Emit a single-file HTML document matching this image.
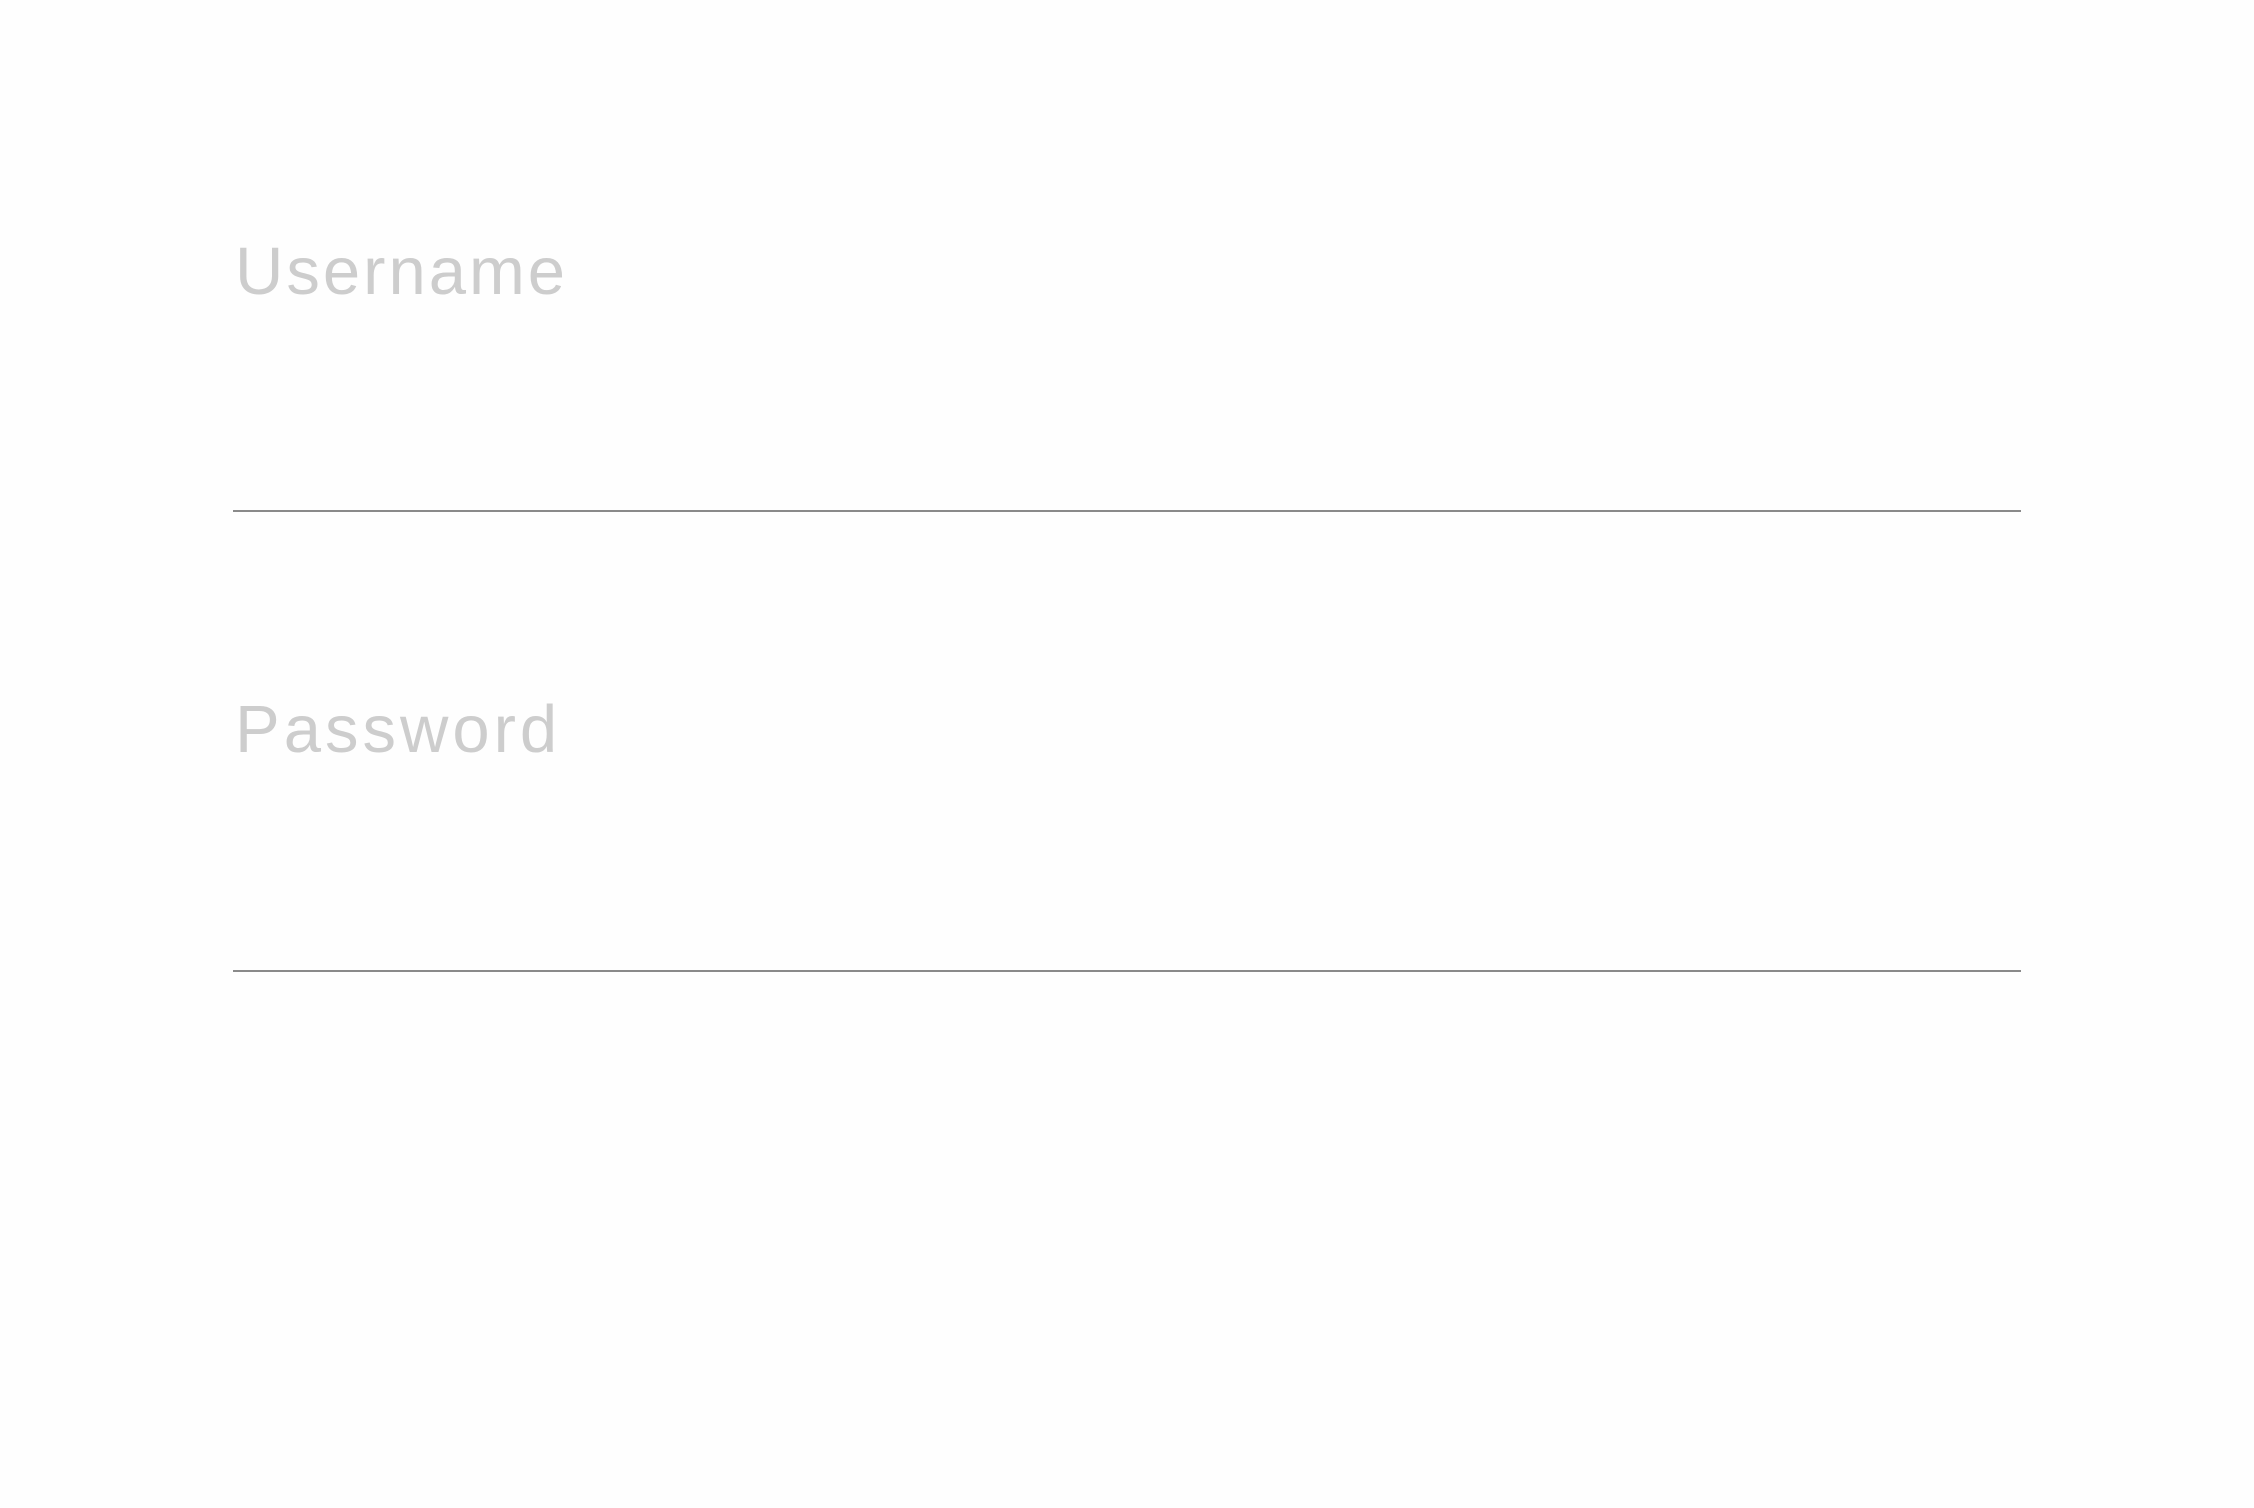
<!DOCTYPE html>
<html><head><meta charset="utf-8"><style>
html,body{margin:0;padding:0;width:2254px;height:1508px;background:#fefefe;overflow:hidden}
.l{position:absolute;left:235px;font-family:"Liberation Sans",Arial,sans-serif;font-size:67px;line-height:1;letter-spacing:3px;color:#cdcdcd;white-space:nowrap}
.u{position:absolute;left:233px;width:1788px;height:2px;background:#8a8a8a}
</style></head><body>
<div class="l" style="top:238px">Username</div>
<div class="u" style="top:510px"></div>
<div class="l" style="top:696px;letter-spacing:4px">Password</div>
<div class="u" style="top:970px"></div>
</body></html>
